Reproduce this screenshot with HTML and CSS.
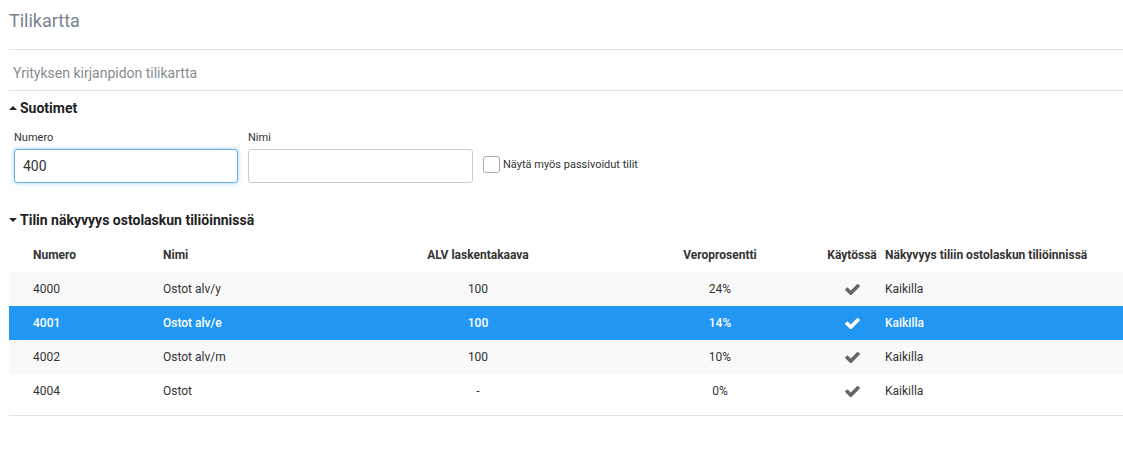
FILE: index.html
```html
<!DOCTYPE html>
<html lang="fi">
<head>
<meta charset="utf-8">
<title>Tilikartta</title>
<link rel="stylesheet" href="styles.css">
</head>
<body>
<div class="page">
  <h1 class="title">Tilikartta</h1>
  <div class="subtitle">Yrityksen kirjanpidon tilikartta</div>

  <h2 class="section"><span class="caret caret-up"></span>Suotimet</h2>
  <div class="filters">
    <div class="field">
      <label class="label">Numero</label>
      <input class="input focused" type="text" value="400">
    </div>
    <div class="field">
      <label class="label">Nimi</label>
      <input class="input" type="text" value="">
    </div>
    <div class="check">
      <span class="box"></span>
      <span class="check-label">Näytä myös passivoidut tilit</span>
    </div>
  </div>

  <h2 class="section section-2"><span class="caret caret-down"></span>Tilin näkyvyys ostolaskun tiliöinnissä</h2>
  <div class="table-wrap">
    <table class="grid">
      <colgroup>
        <col class="c1"><col class="c2"><col class="c3"><col class="c4"><col class="c5"><col class="c6">
      </colgroup>
      <thead>
        <tr>
          <th class="t1">Numero</th>
          <th class="t2">Nimi</th>
          <th class="tc">ALV laskentakaava</th>
          <th class="tc">Veroprosentti</th>
          <th class="tc t5">Käytössä</th>
          <th class="t6">Näkyvyys tiliin ostolaskun tiliöinnissä</th>
        </tr>
      </thead>
      <tbody>
        <tr class="odd">
          <td class="t1">4000</td><td class="t2">Ostot alv/y</td><td class="tc">100</td><td class="tc">24%</td>
          <td class="tc t5"><svg class="ok" viewBox="110 390 1572 1050" width="15" height="11"><path d="M1671 566q0 40-28 68l-724 724-136 136q-28 28-68 28t-68-28l-136-136-362-362q-28-28-28-68t28-68l136-136q28-28 68-28t68 28l294 295 656-657q28-28 68-28t68 28l136 136q28 28 28 68z"/></svg></td>
          <td class="t6">Kaikilla</td>
        </tr>
        <tr class="active">
          <td class="t1">4001</td><td class="t2">Ostot alv/e</td><td class="tc">100</td><td class="tc">14%</td>
          <td class="tc t5"><svg class="ok" viewBox="110 390 1572 1050" width="15" height="11"><path d="M1671 566q0 40-28 68l-724 724-136 136q-28 28-68 28t-68-28l-136-136-362-362q-28-28-28-68t28-68l136-136q28-28 68-28t68 28l294 295 656-657q28-28 68-28t68 28l136 136q28 28 28 68z"/></svg></td>
          <td class="t6">Kaikilla</td>
        </tr>
        <tr class="odd">
          <td class="t1">4002</td><td class="t2">Ostot alv/m</td><td class="tc">100</td><td class="tc">10%</td>
          <td class="tc t5"><svg class="ok" viewBox="110 390 1572 1050" width="15" height="11"><path d="M1671 566q0 40-28 68l-724 724-136 136q-28 28-68 28t-68-28l-136-136-362-362q-28-28-28-68t28-68l136-136q28-28 68-28t68 28l294 295 656-657q28-28 68-28t68 28l136 136q28 28 28 68z"/></svg></td>
          <td class="t6">Kaikilla</td>
        </tr>
        <tr>
          <td class="t1">4004</td><td class="t2">Ostot</td><td class="tc">-</td><td class="tc">0%</td>
          <td class="tc t5"><svg class="ok" viewBox="110 390 1572 1050" width="15" height="11"><path d="M1671 566q0 40-28 68l-724 724-136 136q-28 28-68 28t-68-28l-136-136-362-362q-28-28-28-68t28-68l136-136q28-28 68-28t68 28l294 295 656-657q28-28 68-28t68 28l136 136q28 28 28 68z"/></svg></td>
          <td class="t6">Kaikilla</td>
        </tr>
      </tbody>
    </table>
  </div>
</div>
</body>
</html>
```

FILE: styles.css
```css
* { box-sizing: border-box; }
html, body { margin: 0; padding: 0; background: #fff; }
body {
  font-family: Roboto, "Liberation Sans", Arial, sans-serif;
  color: #333;
}
.page { padding: 0 0 0 9px; }

.title {
  margin: 11px 0 0 0;
  padding: 0 0 18px 0;
  font-size: 18px;
  line-height: 20px;
  font-weight: 400;
  color: #76838f;
  border-bottom: 1px solid #e2e2e2;
}
.subtitle {
  padding: 13px 0 7px 4px;
  font-size: 14px;
  line-height: 20px;
  color: #858d94;
  border-bottom: 1px solid #e2e2e2;
}

.section {
  margin: 7px 0 0 0;
  font-size: 14px;
  line-height: 20px;
  font-weight: 700;
  color: #222;
  display: flex;
  align-items: center;
}
.section-2 { margin-top: 27px; }
.caret {
  display: inline-block;
  width: 0; height: 0;
  border-left: 4px solid transparent;
  border-right: 4px solid transparent;
  margin-right: 3px;
}
.caret-up { border-bottom: 4px solid #222; }
.caret-down { border-top: 4px solid #222; }

.filters {
  display: flex;
  align-items: flex-end;
  gap: 10px;
  margin: 12px 0 0 5px;
}
.field { display: flex; flex-direction: column; }
.field + .field .input { width: 225px; }
.label {
  font-size: 11px;
  line-height: 15px;
  color: #333;
  margin-bottom: 4px;
}
.input {
  width: 224px;
  height: 34px;
  padding: 0 8px;
  font-family: Roboto, "Liberation Sans", Arial, sans-serif;
  font-size: 14px;
  color: #333;
  border: 1px solid #ccc;
  border-radius: 3px;
  outline: none;
  background: #fff;
}
.input.focused {
  border-color: #66afe9;
  box-shadow: 0 0 4px rgba(102, 175, 233, 0.6);
}
.check {
  display: flex;
  align-items: center;
  height: 34px;
  padding-bottom: 4px;
}
.box {
  width: 17px;
  height: 17px;
  border: 1px solid #aaa;
  border-radius: 3px;
  background: #fff;
  margin-right: 3px;
}
.check-label { font-size: 11px; color: #333; }

.table-wrap {
  margin-top: 8px;
  padding-bottom: 7px;
  border-bottom: 1px solid #e2e2e2;
}
.grid {
  width: 100%;
  border-collapse: collapse;
  table-layout: fixed;
  font-size: 12px;
}
.c1 { width: 146px; }
.c2 { width: 184px; }
.c3 { width: 278px; }
.c4 { width: 206px; }
.c5 { width: 58px; }
.c6 { width: auto; }
.grid th, .grid td {
  height: 34px;
  padding: 0 8px;
  vertical-align: middle;
  text-align: left;
  white-space: nowrap;
}
.grid th { font-weight: 700; color: #333; }
.grid td { color: #333; }
.grid .t1 { padding-left: 24px; }
.grid .tc { text-align: center; }
.grid .t5 { padding: 0 4px; }
.grid .t6 { padding-left: 4px; }
.grid tr.odd td { background: #f9f9f9; }
.grid tr.active td { background: #2196f3; color: #fff; font-weight: 500; }
.ok { display: inline-block; vertical-align: middle; fill: #666; }
.active .ok { fill: #fff; }
```
